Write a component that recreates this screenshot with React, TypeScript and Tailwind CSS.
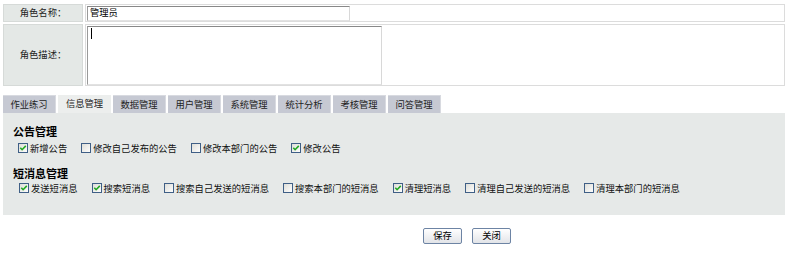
import React from "react";

const font = { fontFamily: '"Noto Sans CJK SC", "Noto Sans", sans-serif' };

function Check({ checked }: { checked: boolean }) {
  return (
    <svg width="10" height="10" viewBox="0 0 10 10" className="shrink-0">
      <defs>
        <linearGradient id="cbg" x1="0" y1="0" x2="1" y2="1">
          <stop offset="0" stopColor="#dcdcd6" />
          <stop offset="1" stopColor="#ffffff" />
        </linearGradient>
      </defs>
      <rect x="0.5" y="0.5" width="9" height="9" fill="url(#cbg)" stroke="#3f5f86" strokeWidth="1" />
      {checked && (
        <path d="M2.3 4.8 L4.1 6.7 L7.8 2.9" fill="none" stroke="#22a822" strokeWidth="1.6" />
      )}
    </svg>
  );
}

function Item({ label, checked }: { label: string; checked: boolean }) {
  return (
    <div className="flex items-center gap-[2px]">
      <Check checked={checked} />
      <span className="text-[9.3px] leading-[12px] text-[#111]">{label}</span>
    </div>
  );
}

const tabs = ["作业练习", "信息管理", "数据管理", "用户管理", "系统管理", "统计分析", "考核管理", "问答管理"];

export default function App() {
  return (
    <div className="w-[788px] h-[253px] bg-white overflow-hidden" style={font}>
      <div className="pt-[4px] pl-[3px] w-[785px]">
        <div className="flex h-[18px] gap-[2px]">
          <div className="w-[80px] bg-[#e4e8e6] border border-[#d6dad8] flex items-center justify-center text-[9.3px] text-[#222]">
            角色名称：
          </div>
          <div className="flex-1 border border-[#dcdcdc] flex items-center pl-[1px]">
            <div className="w-[263px] h-[15px] bg-white border border-t-[#888] border-l-[#999] border-r-[#d8d8d8] border-b-[#e2e2e2] flex items-center pl-[2px] text-[9.3px] text-black">
              管理员
            </div>
          </div>
        </div>
        <div className="flex h-[62px] gap-[2px] mt-[2px]">
          <div className="w-[80px] bg-[#e4e8e6] border border-[#d6dad8] flex items-center justify-center text-[9.3px] text-[#222]">
            角色描述：
          </div>
          <div className="flex-1 border border-[#dcdcdc] flex items-center pl-[1px]">
            <div className="w-[295px] h-[59px] bg-white border border-t-[#888] border-l-[#999] border-r-[#d8d8d8] border-b-[#e2e2e2] pl-[2px] pt-[1px]">
              <div className="w-[1px] h-[11px] bg-black ml-[1px]" />
            </div>
          </div>
        </div>

        <div className="flex gap-[2px] mt-[9px] h-[18px]">
          {tabs.map((t, i) => (
            <div
              key={t}
              className={
                i === 1
                  ? "w-[53px] h-[18px] bg-[#eceeed] flex items-center justify-center text-[9.3px] text-[#222]"
                  : "w-[53px] h-[18px] bg-[#c6c9d3] border-t border-r border-[#d8dae0] flex items-center justify-center text-[9.3px] text-[#222]"
              }
            >
              {t}
            </div>
          ))}
        </div>

        <div className="bg-[#e6e9e8] h-[102px] pt-[12px] pl-[10px]">
          <div className="text-[11px] leading-[12px] font-bold text-black">公告管理</div>
          <div className="flex items-center gap-[14px] mt-[4px] pl-[5px] h-[13px]">
            <Item label="新增公告" checked />
            <Item label="修改自己发布的公告" checked={false} />
            <Item label="修改本部门的公告" checked={false} />
            <Item label="修改公告" checked />
          </div>
          <div className="text-[11px] leading-[12px] font-bold text-black mt-[13px]">短消息管理</div>
          <div className="flex items-center gap-[14px] mt-[2px] pl-[6px] h-[13px]">
            <Item label="发送短消息" checked />
            <Item label="搜索短消息" checked />
            <Item label="搜索自己发送的短消息" checked={false} />
            <Item label="搜索本部门的短消息" checked={false} />
            <Item label="清理短消息" checked />
            <Item label="清理自己发送的短消息" checked={false} />
            <Item label="清理本部门的短消息" checked={false} />
          </div>
        </div>
      </div>

      <div className="flex gap-[10px] ml-[423px] mt-[13px]">
        <button className="w-[39px] h-[16px] rounded-[2px] border border-[#6d84a4] bg-gradient-to-b from-white to-[#e2e4e8] text-[9.3px] text-black flex items-center justify-center">
          保存
        </button>
        <button className="w-[39px] h-[16px] rounded-[2px] border border-[#6d84a4] bg-gradient-to-b from-white to-[#e2e4e8] text-[9.3px] text-black flex items-center justify-center">
          关闭
        </button>
      </div>
    </div>
  );
}
